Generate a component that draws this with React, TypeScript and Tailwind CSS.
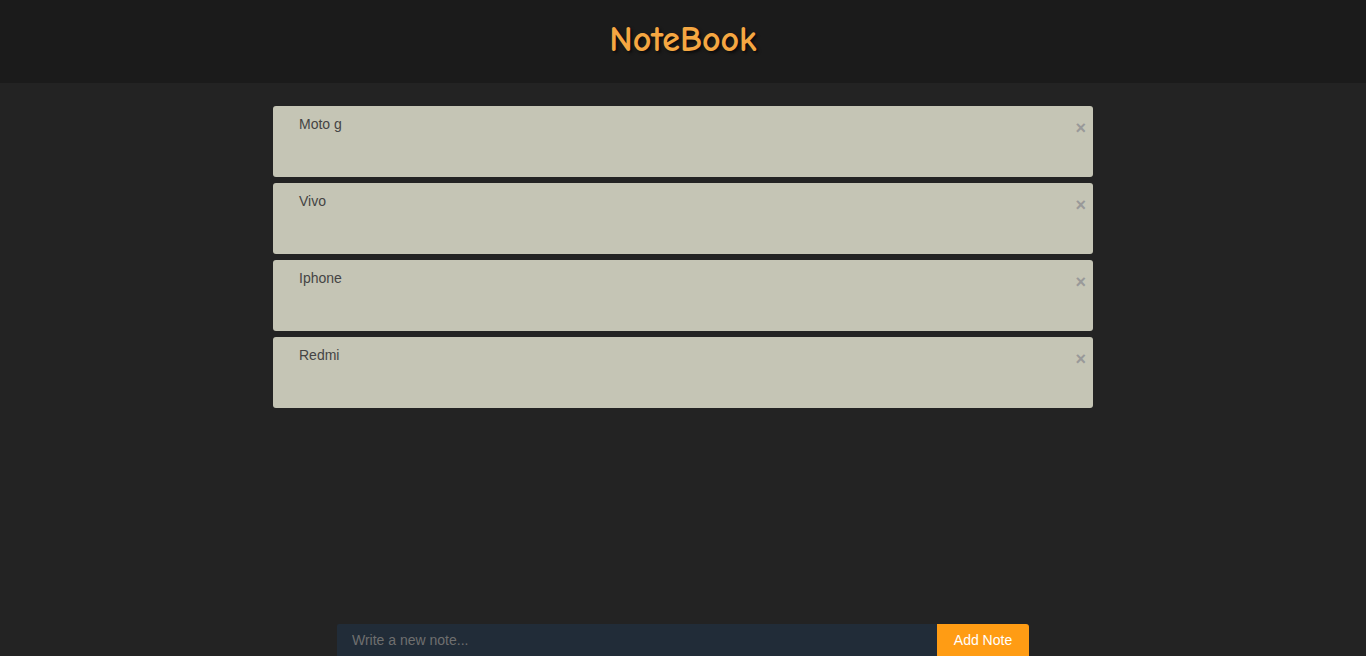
import React from 'react';

const notes = ['Moto g', 'Vivo', 'Iphone', 'Redmi'];

function App() {
    return (
        <div className="flex flex-col h-screen bg-[#232323] font-['Liberation_Sans',Arial,sans-serif]">
            <header className="h-[83px] shrink-0 bg-[#1b1b1b] flex items-center justify-center">
                <h1 className="text-[36px] leading-none font-bold text-[#f5a742] font-['Comic_Sans_MS','Comic_Neue',cursive] [text-shadow:2px_2px_3px_rgba(0,0,0,0.6)] -mt-[4px]">
                    NoteBook
                </h1>
            </header>
            <main className="flex-1 flex flex-col items-center pt-[23px] gap-[6px]">
                {notes.map((note) => (
                    <div
                        key={note}
                        className="relative w-[820px] h-[71px] bg-[#c5c5b5] rounded-[3px] pl-[26px] pt-[8px] text-[14px] text-[#444]"
                    >
                        {note}
                        <span className="absolute right-[7px] top-[13px] text-[18px] font-bold text-[#999] leading-none">
                            ×
                        </span>
                    </div>
                ))}
            </main>
            <footer className="shrink-0 flex justify-center">
                <input
                    type="text"
                    placeholder="Write a new note..."
                    className="w-[600px] h-[32px] bg-[#212c38] px-[15px] text-[14px] text-[#ddd] placeholder:text-[#6f6f6f] outline-none rounded-tl-[2px]"
                />
                <button className="w-[92px] h-[32px] bg-[#ff9c14] text-white text-[14px] rounded-tr-[3px]">
                    Add Note
                </button>
            </footer>
        </div>
    );
}

export default App;
